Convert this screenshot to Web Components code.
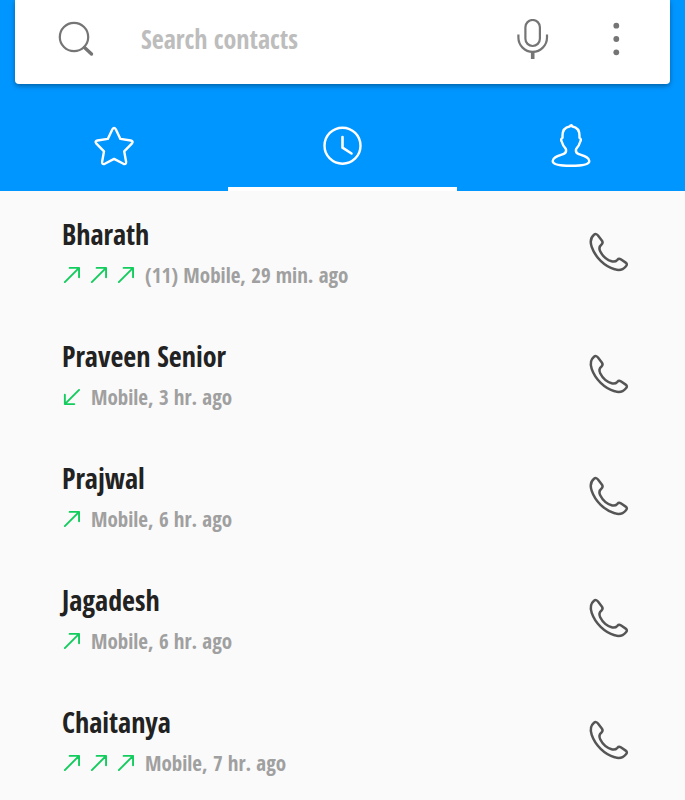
<!DOCTYPE html>
<html lang="en">
<head>
<meta charset="utf-8">
<meta name="viewport" content="width=device-width, initial-scale=1">
<title>Contacts</title>
<style>
  html { scrollbar-width: none; }
  body {
    margin: 0;
    background: #fafafa;
    font-family: "Open Sans Condensed", "Liberation Sans Narrow", "DejaVu Sans Condensed", sans-serif;
    font-weight: bold;
  }
</style>
</head>
<body>
<phone-app></phone-app>

<script>
(function() {
  class SearchBar extends HTMLElement {
    constructor() {
      super();
      this.attachShadow({ mode: 'open' });
      this.shadowRoot.innerHTML = `
        <style>
          :host {
            display: block;
            margin: 0 15px;
            background: #fff;
            border-radius: 0 0 4px 4px;
            box-shadow: 0 2px 5px rgba(0, 0, 0, 0.35);
          }
          form {
            display: flex;
            align-items: center;
            gap: 44px;
            padding: 19px 34px 25px 41px;
          }
          button {
            flex: none;
            padding: 0;
            border: 0;
            background: none;
            color: #757575;
          }
          svg { display: block; width: 40px; height: 40px; fill: none; stroke: currentColor; }
          input {
            flex: 1;
            min-width: 0;
            padding: 0 0 0 1px;
            border: 0;
            outline: 0;
            background: none;
            color: #222;
            font: inherit;
            font-size: 26px;
            line-height: 40px;
            height: 40px;
          }
          input::placeholder { color: #bdbdbd; opacity: 1; }
        </style>
        <form>
          <button type="button" aria-label="Search">
            <svg viewBox="0 0 40 40" stroke-width="2.2">
              <circle cx="18" cy="18" r="14.2"/>
              <path d="M28.5 28.5l7 6.5" stroke-width="3.4" stroke-linecap="round"/>
            </svg>
          </button>
          <input type="text" placeholder="Search contacts" aria-label="Search contacts">
          <button type="button" aria-label="Voice search">
            <svg viewBox="0 0 40 40" stroke-width="2.2">
              <rect x="13.4" y="1" width="14.5" height="26" rx="7.2"/>
              <path d="M6.4 15.5v3a14.3 14.3 0 0 0 28.6 0v-3"/>
              <path d="M20.7 32v8" stroke-width="3.6"/>
            </svg>
          </button>
          <button type="button" aria-label="More options">
            <svg viewBox="0 0 40 40">
              <g fill="currentColor" stroke="none">
                <circle cx="20.3" cy="6.7" r="2.9"/>
                <circle cx="20.3" cy="20" r="2.9"/>
                <circle cx="20.3" cy="33.3" r="2.9"/>
              </g>
            </svg>
          </button>
        </form>
      `;
    }
  }

  class TabBar extends HTMLElement {
    constructor() {
      super();
      this.attachShadow({ mode: 'open' });
      this.shadowRoot.innerHTML = `
        <style>
          :host { display: block; }
          nav { display: flex; padding-top: 17px; }
          button {
            flex: 1;
            height: 90px;
            padding: 4px 0 0;
            border: 0;
            border-bottom: 4px solid transparent;
            background: none;
            color: #fff;
          }
          button[aria-selected="true"] { border-bottom-color: #fff; }
          svg {
            display: block;
            margin: 0 auto;
            width: 44px;
            height: 44px;
            fill: none;
            stroke: currentColor;
            stroke-width: 2.4;
            stroke-linecap: round;
            stroke-linejoin: round;
          }
        </style>
        <nav role="tablist">
          <button role="tab" aria-selected="false" aria-label="Favorites">
            <svg viewBox="0 0 44 44"><path d="M20.4 5.3q1.7-2.8 3.4 0l4.6 9.6 10.4 1.6q3 .8 1 3.2l-7.6 7.7 1.9 10.4q.2 3.1-2.7 2l-9.3-4.9-9.3 4.9q-2.9 1.1-2.7-2L12 27.4 4.4 19.7q-2-2.4 1-3.2l10.4-1.6z"/></svg>
          </button>
          <button role="tab" aria-selected="true" aria-label="Recents">
            <svg viewBox="0 0 44 44"><circle cx="22.5" cy="21.7" r="18"/><path d="M22.5 13v10.7l9 5.8" stroke-width="2.6"/></svg>
          </button>
          <button role="tab" aria-selected="false" aria-label="Contacts">
            <svg viewBox="0 0 44 44"><path d="M22.5 1.2c-1 .2-1.600.7-1.800 1.300-4.500.7-7.200 4.300-7.200 9.300v2c-1.500.6-1.700 2.300-.8 3.700.9 3.200 2 5.300 4.100 7.400.8 2.600-.2 4.300-2.600 5.200-5 1.800-10.500 3-10.500 6.900 0 3.300 8 4.800 18.300 4.800s18.300-1.500 18.300-4.800c0-3.900-5.500-5.100-10.500-6.900-2.400-.9-3.400-2.600-2.600-5.200 2.100-2.100 3.200-4.200 4.100-7.400.9-1.400.7-3.100-.8-3.700v-2c0-5-2.700-8.600-7.200-9.300z"/></svg>
          </button>
        </nav>
      `;
    }
  }

  class CallEntry extends HTMLElement {
    constructor() {
      super();
      this.attachShadow({ mode: 'open' });
      this.shadowRoot.innerHTML = `
        <style>
          :host {
            display: flex;
            align-items: flex-start;
            justify-content: space-between;
            padding: 23px 55px 17px 62px;
          }
          .name { color: #222; font-size: 28px; line-height: 40px; }
          .detail {
            display: flex;
            align-items: center;
            color: #a0a0a0;
            font-size: 21px;
            line-height: 42px;
            white-space: nowrap;
          }
          .arrows { display: flex; gap: 9px; margin-right: 11px; }
          .arrow {
            width: 18px;
            height: 18px;
            fill: none;
            stroke: #12cc5d;
            stroke-width: 2;
            stroke-linecap: round;
            stroke-linejoin: round;
          }
          button {
            padding: 0;
            margin-top: 16px;
            border: 0;
            background: none;
            color: #555;
          }
          button svg {
            display: block;
            width: 44px;
            height: 44px;
            fill: none;
            stroke: currentColor;
            stroke-width: 2.5;
            stroke-linejoin: round;
          }
        </style>
        <div>
          <div class="name"><slot name="name"></slot></div>
          <div class="detail"><span class="arrows"></span><slot></slot></div>
        </div>
        <button type="button" aria-label="Call">
          <svg viewBox="0 0 44 44"><path d="M8 4.7c1.5-1.2 2.8-.7 4 .9l4 5.2c1 1.5.8 2.5-.5 3.7-2.2 1.8-2.7 4-1.3 6.800 2.5 5 6.700 8.600 11.400 10 2.500.7 4.300.1 5.800-1.500 1-1.200 2-1.300 3.400-.5l4.900 3.300c1.500 1 1.500 2.200.3 3.600-2.700 3.300-6.800 4.700-11.400 3C18.500 36.400 9.200 27.200 5.700 16.900 4 11.900 4.600 7.500 8 4.700z"/></svg>
        </button>
      `;
    }

    connectedCallback() {
      const count = Number(this.getAttribute('calls')) || 1;
      const path = this.hasAttribute('incoming')
        ? 'M18 2L3 17M3 7v10h10'
        : 'M3 17L18 2M8 2h10v10';
      const arrow = `<svg class="arrow" viewBox="0 0 19 19"><path d="${path}"/></svg>`;
      this.shadowRoot.querySelector('.arrows').innerHTML = arrow.repeat(count);
    }
  }

  class PhoneApp extends HTMLElement {
    constructor() {
      super();
      this.attachShadow({ mode: 'open' });
      this.shadowRoot.innerHTML = `
        <style>
          :host { display: block; }
          header { background: #0096ff; }
        </style>
        <header>
          <search-bar></search-bar>
          <tab-bar></tab-bar>
        </header>
        <main>
          <call-entry calls="3"><span slot="name">Bharath</span>(11) Mobile, 29 min. ago</call-entry>
          <call-entry incoming><span slot="name">Praveen Senior</span>Mobile, 3 hr. ago</call-entry>
          <call-entry><span slot="name">Prajwal</span>Mobile, 6 hr. ago</call-entry>
          <call-entry><span slot="name">Jagadesh</span>Mobile, 6 hr. ago</call-entry>
          <call-entry calls="3"><span slot="name">Chaitanya</span>Mobile, 7 hr. ago</call-entry>
        </main>
      `;
    }
  }

  customElements.define('search-bar', SearchBar);
  customElements.define('tab-bar', TabBar);
  customElements.define('call-entry', CallEntry);
  customElements.define('phone-app', PhoneApp);
})();
</script>
</body>
</html>
